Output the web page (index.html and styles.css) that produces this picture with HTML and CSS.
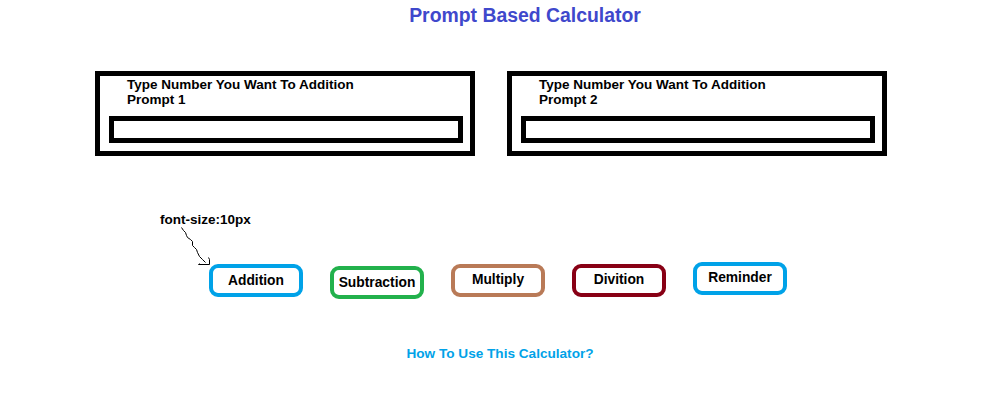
FILE: index.html
```html
<!DOCTYPE html>
<html lang="en">
<head>
<meta charset="utf-8">
<title>Prompt Based Calculator</title>
<link rel="stylesheet" href="styles.css">
</head>
<body>
<main class="page">
  <h1 class="title">Prompt Based Calculator</h1>

  <section class="prompts">
    <div class="card">
      <div class="label">Type Number You Want To Addition<br>Prompt 1</div>
      <div class="field"></div>
    </div>
    <div class="card">
      <div class="label">Type Number You Want To Addition<br>Prompt 2</div>
      <div class="field"></div>
    </div>
  </section>

  <p class="note">font-size:10px</p>

  <svg class="arrow" width="40" height="46" viewBox="0 0 40 46" aria-hidden="true">
    <polyline points="6.5,5.5 8.5,8.5 10.5,10.5 11.5,13.5 12.5,15.5 15.5,17.5 17.5,19.5 17.5,23.5 19.5,25.5 21.5,27.5 22.5,30.5 24.5,34.5 27.5,37.5 30.5,40.5" fill="none" stroke="#000" stroke-width="1"/>
    <polyline points="33.5,35.5 34.5,37.5 34.5,42.5 23.5,42.5 24.5,41.5" fill="none" stroke="#000" stroke-width="1"/>
  </svg>

  <section class="buttons">
    <button class="btn btn-add">Addition</button>
    <button class="btn btn-sub">Subtraction</button>
    <button class="btn btn-mul">Multiply</button>
    <button class="btn btn-div">Divition</button>
    <button class="btn btn-rem">Reminder</button>
  </section>

  <p class="help">How To Use This Calculator?</p>
</main>
</body>
</html>
```

FILE: styles.css
```css
html, body {
  margin: 0;
  padding: 0;
  background: #ffffff;
}

body {
  font-family: "Liberation Sans", Arial, sans-serif;
  font-weight: bold;
  color: #000000;
}

.page {
  position: relative;
  width: 1006px;
  height: 413px;
  overflow: hidden;
}

.title {
  margin: 0;
  padding: 4px 0 0 44px;
  text-align: center;
  font-size: 19.4px;
  line-height: 22px;
  color: #3f48cc;
}

.prompts {
  display: flex;
  gap: 32px;
  padding-left: 95px;
  margin-top: 45px;
}

.card {
  box-sizing: border-box;
  width: 380px;
  height: 85px;
  border: 5px solid #000;
  padding: 1px 7px 8px 9px;
}

.label {
  padding-left: 18px;
  font-size: 13.5px;
  line-height: 15px;
}

.field {
  box-sizing: border-box;
  margin-top: 9px;
  height: 27px;
  border: 5px solid #000;
}

.note {
  margin: 56px 0 0 0;
  padding-left: 160px;
  font-size: 13.5px;
  line-height: 15px;
}

.arrow {
  position: absolute;
  left: 175px;
  top: 222px;
}

.buttons {
  display: flex;
  align-items: flex-start;
  gap: 27px;
  padding-left: 209px;
  margin-top: 35px;
}

.btn {
  box-sizing: border-box;
  width: 94px;
  height: 33px;
  padding: 0;
  border: 4px solid;
  border-radius: 9px;
  background: #ffffff;
  font-family: "Liberation Sans", Arial, sans-serif;
  font-weight: bold;
  font-size: 13.8px;
  color: #000;
  text-align: center;
}

.btn-add { border-color: #00a2e8; margin-top: 2px; }
.btn-sub { border-color: #22b14c; margin-top: 4px; }
.btn-mul { border-color: #b97a57; margin-top: 2px; padding-bottom: 3px; }
.btn-div { border-color: #880015; margin-top: 2px; padding-bottom: 2px; }
.btn-rem { border-color: #00a2e8; margin-top: 0; padding-bottom: 2px; }

.help {
  margin: 47px 0 0 0;
  padding-right: 6px;
  text-align: center;
  font-size: 13.6px;
  line-height: 15px;
  color: #00a2e8;
}
```
